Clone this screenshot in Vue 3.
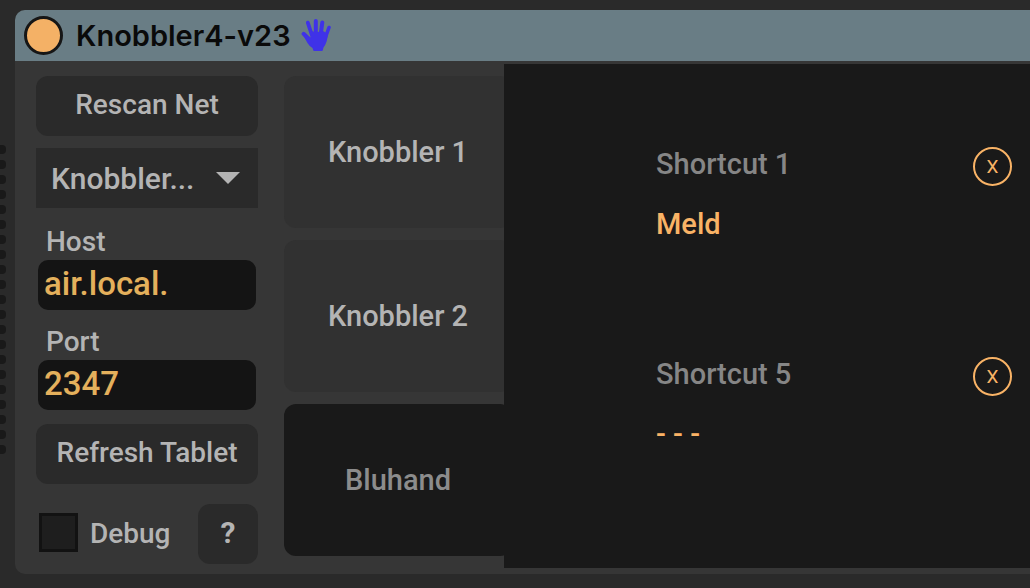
<script setup>
import { ref } from 'vue'

const devices = ['Knobbler...']
const device = ref(devices[0])
const host = ref('air.local.')
const port = ref('2347')
const debug = ref(false)
const tabs = ['Knobbler 1', 'Knobbler 2', 'Bluhand']
const activeTab = ref('Bluhand')
const shortcuts = [
  { name: 'Shortcut 1', value: 'Meld' },
  { name: 'Shortcut 5', value: '- - -' }
]
</script>

<template>
  <div class="page">
    <div class="rail" aria-hidden="true">
      <span v-for="n in 21" :key="n" class="dot"></span>
    </div>
    <main class="device">
      <header class="title-bar">
        <button class="power" type="button" aria-label="Device on"></button>
        <h1>Knobbler4-v23</h1>
        <svg class="hand" viewBox="0 0 30 34" width="30" height="34" aria-hidden="true">
          <g fill="none" stroke="#3f32e8" stroke-linecap="round">
            <path d="M11.500 19 6.800 4.600" stroke-width="3.8" />
            <path d="M14.800 18 14.800 3" stroke-width="4" />
            <path d="M19.500 18 21.300 4.400" stroke-width="4" />
            <path d="M23.500 22 28 9.500" stroke-width="3.6" />
            <path d="M10 23 2.600 15.800" stroke-width="4" />
          </g>
          <path
            fill="#3f32e8"
            d="M10 13 Q16 15 22 13 L26.800 16 Q26.500 21 25.600 23.500 Q24.500 27 22.500 29.500 L22 31.500 Q22 33 20.500 33 L13.500 33 Q12 33 12 31.500 L11.500 30 Q8.500 28.500 6.500 25 Q4.500 21.500 2.500 18 L4.500 16 Q7 19 10 19.500 Z"
          />
        </svg>
      </header>

      <div class="body">
        <section class="settings">
          <button class="btn" type="button">Rescan Net</button>
          <div class="picker">
            <select v-model="device" aria-label="Device">
              <option v-for="d in devices" :key="d">{{ d }}</option>
            </select>
            <svg class="arrow" viewBox="0 0 24 12" width="24" height="12" aria-hidden="true">
              <path d="M0 0H24L12 12Z" fill="#b4b4b4" />
            </svg>
          </div>
          <div class="fields">
            <label for="host">Host</label>
            <input id="host" v-model="host" type="text" />
            <label for="port">Port</label>
            <input id="port" v-model="port" type="text" />
          </div>
          <button class="btn" type="button">Refresh Tablet</button>
          <div class="debug-row">
            <label class="debug">
              <input v-model="debug" type="checkbox" />
              <span>Debug</span>
            </label>
            <button class="btn help" type="button">?</button>
          </div>
        </section>

        <nav class="tabs">
          <button
            v-for="t in tabs"
            :key="t"
            type="button"
            class="tab"
            :class="{ active: t === activeTab }"
            @click="activeTab = t"
          >
            {{ t }}
          </button>
        </nav>

        <section class="panel">
          <article v-for="s in shortcuts" :key="s.name" class="shortcut">
            <div>
              <h2>{{ s.name }}</h2>
              <p>{{ s.value }}</p>
            </div>
            <button class="clear" type="button" :aria-label="'Clear ' + s.name">X</button>
          </article>
        </section>
      </div>
    </main>
  </div>
</template>

<style>
body {
  background: #2a2a2a;
}
</style>

<style scoped>
.page,
.page * {
  box-sizing: border-box;
}
.page {
  display: flex;
  gap: 9px;
  min-height: 100vh;
  padding: 10px 0 14px;
  overflow: hidden;
  background: #2a2a2a;
  color: #b4b4b4;
  font: 500 28px/32px Roboto, sans-serif;
}
button,
input,
select {
  margin: 0;
  border: 0;
  color: inherit;
  font: inherit;
}
h1,
h2,
p {
  margin: 0;
  font: inherit;
}
.rail {
  display: flex;
  flex: none;
  flex-direction: column;
  gap: 6px;
  width: 6px;
  padding-top: 135px;
}
.dot {
  height: 9px;
  border-radius: 0 4px 4px 0;
  background: #191919;
}
.device {
  display: flex;
  flex: 1;
  flex-direction: column;
  min-width: 0;
  border-radius: 10px 0 0 10px;
  background: #363636;
  overflow: hidden;
}
.title-bar {
  display: flex;
  align-items: center;
  height: 51px;
  padding-left: 9px;
  background: #697d85;
}
.power {
  width: 39px;
  height: 39px;
  padding: 0;
  border: 3px solid #161616;
  border-radius: 50%;
  background: #f4b166;
}
.hand {
  margin-bottom: 2px;
}
h1 {
  margin: 0 10px 0 13px;
  color: #0a0a0a;
  font: 600 29px/36px Inter, sans-serif;
}
.body {
  display: flex;
  flex: 1;
  padding: 3px 0 6px 21px;
}
.settings {
  display: flex;
  flex: none;
  flex-direction: column;
  width: 222px;
  padding-top: 12px;
}
.btn {
  height: 60px;
  padding: 0 0 3px;
  border-radius: 12px;
  background: #2a2a2a;
}
.picker {
  display: grid;
  align-items: center;
  margin-top: 12px;
}
.picker > * {
  grid-area: 1 / 1;
}
.picker select {
  width: 100%;
  height: 60px;
  padding: 2px 50px 0 15px;
  appearance: none;
  border-radius: 0;
  background: #2a2a2a;
  font-size: 30px;
}
.arrow {
  justify-self: end;
  margin-right: 18px;
  pointer-events: none;
}
.fields {
  display: flex;
  flex-direction: column;
  padding: 2px 2px 14px;
}
.fields label {
  height: 50px;
  padding: 16px 0 0 8px;
}
.fields input {
  width: 100%;
  height: 50px;
  padding: 0 6px 4px;
  border-radius: 10px;
  background: #141414;
  color: #e4b05c;
  font-size: 33px;
}
.debug-row {
  display: flex;
  align-items: center;
  justify-content: space-between;
  margin-top: 20px;
}
.debug {
  display: flex;
  align-items: center;
  gap: 12px;
  padding-left: 3px;
}
.debug input {
  width: 39px;
  height: 39px;
  margin-bottom: 3px;
  appearance: none;
  border: 3px solid #121212;
  background: #1e1e1e;
}
.help {
  width: 60px;
  font-size: 30px;
  font-weight: 700;
}
.tabs {
  display: flex;
  flex: none;
  flex-direction: column;
  gap: 12px;
  width: 228px;
  margin-left: 26px;
  padding: 12px 0;
}
.tab {
  flex: 1;
  padding: 0;
  border-radius: 12px;
  background: #313131;
  font-size: 29px;
}
.tab.active {
  background: #191919;
  color: #8c8c8c;
}
.panel {
  display: flex;
  flex: 1;
  flex-direction: column;
  gap: 90px;
  min-width: 0;
  margin-left: -8px;
  padding: 70px 18px 0 152px;
  background: #191919;
  font-size: 29px;
  z-index: 1;
}
.shortcut {
  display: flex;
  align-items: flex-start;
  justify-content: space-between;
  line-height: 60px;
}
h2 {
  color: #868686;
}
p {
  color: #f9b366;
}
.clear {
  width: 39px;
  height: 39px;
  margin-top: 13px;
  padding: 0;
  border: 2px solid #f9b366;
  border-radius: 50%;
  background: none;
  color: #f9b366;
  font: 400 19px/20px Roboto, sans-serif;
}
</style>
